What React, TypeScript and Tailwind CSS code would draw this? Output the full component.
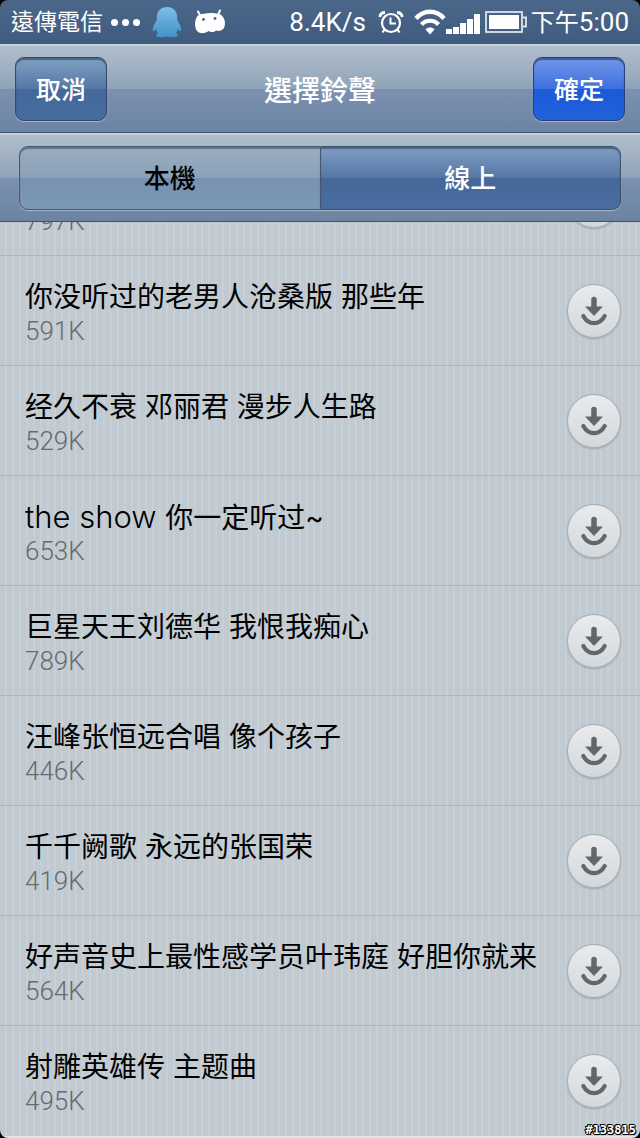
import { useState } from "react";

const ringtones = [
  { title: "", size: "797K" },
  { title: "你没听过的老男人沧桑版 那些年", size: "591K" },
  { title: "经久不衰 邓丽君 漫步人生路", size: "529K" },
  { latin: "the show ", title: "你一定听过~", size: "653K" },
  { title: "巨星天王刘德华 我恨我痴心", size: "789K" },
  { title: "汪峰张恒远合唱 像个孩子", size: "446K" },
  { title: "千千阙歌 永远的张国荣", size: "419K" },
  { title: "好声音史上最性感学员叶玮庭 好胆你就来", size: "564K" },
  { title: "射雕英雄传 主题曲", size: "495K" },
];

const barClass =
  "border-t-2 border-b border-t-[#c6d1db] border-b-[#3f546c] bg-[linear-gradient(#b1bfcd,#8fa2b7_50%,#7c91b1_50%,#6c83a2)]";

function PenguinIcon() {
  return (
    <svg className="h-[32px] w-[30px]" viewBox="0 0 30 32" aria-hidden="true">
      <defs>
        <linearGradient id="penguin" x1="0" y1="0" x2="0" y2="1">
          <stop offset="0" stopColor="#7cbfe8" />
          <stop offset="1" stopColor="#4292c4" />
        </linearGradient>
      </defs>
      <path
        fill="url(#penguin)"
        d="M15 1C8.500 1 4.800 5.500 4.800 11.500v3C2.500 17 .6 21 .8 24.500c.4 1.300 2 .3 3.200-1.500.4 1.800 1 3 2 4-2.500.8-2.500 3.800.5 4 3 .3 6.500.2 8.500-.7 2 .9 5.500 1 8.500.7 3-.2 3-3.200.5-4 1-1 1.600-2.200 2-4 1.200 1.800 2.800 2.800 3.200 1.500C29.400 21 27.500 17 25.200 14.500v-3C25.200 5.500 21.500 1 15 1Z"
      />
    </svg>
  );
}

function AndroidIcon() {
  return (
    <svg className="h-[26px] w-[32px]" viewBox="0 0 32 26" aria-hidden="true">
      <path d="M4 2.500 7 8M26 1.500 23.500 7" stroke="#fff" strokeWidth="2" strokeLinecap="round" />
      <path
        fill="#fff"
        d="M4 6.500C9 3.500 21 3 26.500 5.500c4.500 3 5.500 9 3.500 13.500-2 3-5.500 3.500-8 2.500-2 2-5.500 2-7.500.5-3 2.500-8 3-11 .5C0 19 .3 10 4 6.500Z"
      />
      <circle cx="9.500" cy="10.500" r="1.400" fill="#45628a" />
      <circle cx="21" cy="9.500" r="1.400" fill="#45628a" />
    </svg>
  );
}

function AlarmIcon() {
  return (
    <svg className="h-[24px] w-[26px]" viewBox="0 0 26 24" fill="none" stroke="#fff" aria-hidden="true">
      <circle cx="13" cy="13" r="9" strokeWidth="2.200" />
      <path d="M12.500 7.500v6H18" strokeWidth="2" />
      <path d="M1.800 7C2.200 4 4 2.500 7 2.500M24.200 7c-.4-3-2.200-4.500-5.200-4.500" strokeWidth="2.800" />
      <path d="M6.500 19.500 4.500 22.500M19.500 19.500l2 3" strokeWidth="2" />
    </svg>
  );
}

function WifiIcon() {
  return (
    <svg className="h-[28px] w-[32px]" viewBox="0 0 32 28" fill="none" stroke="#fff" aria-hidden="true">
      <path d="M2 10.500C9.500 1.500 22.500 1.500 30 10.500" strokeWidth="4.500" />
      <path d="M7.500 16.500c4.500-5 12.500-5 17 0" strokeWidth="4.200" />
      <path d="M16 26.500 11.500 21.500c2.500-2.600 6.500-2.600 9 0Z" fill="#fff" stroke="none" />
    </svg>
  );
}

function SignalIcon() {
  return (
    <svg className="h-[20px] w-[35px]" viewBox="0 0 35 20" fill="#fff" aria-hidden="true">
      <path d="M0 15h6v5H0zM7 13h6v7H7zM14 9h6v11h-6zM21 5h6v15h-6zM28 0h6v20h-6z" />
    </svg>
  );
}

function BatteryIcon() {
  return (
    <svg className="h-[22px] w-[42px]" viewBox="0 0 42 22" aria-hidden="true">
      <rect x="1" y="1" width="36" height="20" fill="none" stroke="#dce3ea" strokeWidth="1.800" />
      <rect x="4" y="4" width="30" height="14" fill="#fff" />
      <path d="M38 6.500h3v9h-3" fill="none" stroke="#dce3ea" strokeWidth="1.800" />
    </svg>
  );
}

function DownloadIcon() {
  return (
    <svg className="h-[30px] w-[28px]" viewBox="0 0 28 30" aria-hidden="true">
      <path d="M14 3.500V12" stroke="#666" strokeWidth="5.500" strokeLinecap="round" />
      <path d="M5 10.500h18l-9 9.500Z" fill="#666" />
      <path d="M3.300 20c5.200 9.500 16.200 9.500 21.400 0" fill="none" stroke="#666" strokeWidth="4.200" strokeLinecap="round" />
    </svg>
  );
}

function StatusBar() {
  return (
    <div className="flex h-[44px] shrink-0 items-center justify-between bg-[linear-gradient(#4b688b,#3f5c80)] px-[11px] text-white">
      <div className="flex items-center">
        <span className="text-[23px]">遠傳電信</span>
        <span className="ml-2 flex gap-1">
          <i className="size-[7px] rounded-full bg-white" />
          <i className="size-[7px] rounded-full bg-white" />
          <i className="size-[7px] rounded-full bg-white" />
        </span>
        <span className="ml-3 flex items-center gap-3">
          <PenguinIcon />
          <AndroidIcon />
        </span>
      </div>
      <div className="flex items-center font-['Roboto','Noto_Sans_CJK_TC',sans-serif]">
        <span className="text-[26px]/[32px]">8.4K/s</span>
        <span className="ml-3 flex items-center gap-[10px]">
          <AlarmIcon />
          <WifiIcon />
        </span>
        <span className="mt-1">
          <SignalIcon />
        </span>
        <span className="mx-1">
          <BatteryIcon />
        </span>
        <span className="text-[24px]/[32px]">
          下午<span className="text-[26px]">5:00</span>
        </span>
      </div>
    </div>
  );
}

export default function App() {
  const [tab, setTab] = useState("online");

  return (
    <div className="bg-black">
      <div className="relative flex h-screen flex-col overflow-hidden rounded-[8px] font-['Inter','Noto_Sans_CJK_SC',sans-serif]">
        <div className="flex shrink-0 flex-col font-['Inter','Noto_Sans_CJK_TC',sans-serif]" lang="zh-Hant">
          <StatusBar />

          <header className={`flex h-[89px] items-center justify-between px-[15px] ${barClass}`}>
            <button className="h-[64px] w-[92px] rounded-[9px] border border-[#34496a] bg-[linear-gradient(#819fc3,#5577a5_50%,#456899_50%,#466c9f)] pt-1 text-[25px] font-medium text-white shadow-[0_1px_1px_#ffffff66,inset_0_2px_1px_#22334a88]">
              取消
            </button>
            <h1 className="pt-1 text-[28px] font-medium text-white">選擇鈴聲</h1>
            <button className="h-[64px] w-[92px] rounded-[9px] border border-[#263f7d] bg-[linear-gradient(#7397e9,#3d6fde_50%,#1c5ad7_50%,#2061dc)] pt-1 text-[25px] font-medium text-white shadow-[0_1px_1px_#ffffff66,inset_0_2px_1px_#14275588]">
              確定
            </button>
          </header>

          <nav className={`flex h-[89px] items-center px-[19px] ${barClass}`}>
            <div className="flex h-[64px] flex-1 rounded-[9px] text-[26px] font-medium shadow-[0_1px_1px_#ffffff66]">
              <button
                aria-pressed={tab === "local"}
                onClick={() => setTab("local")}
                className="flex-1 rounded-l-[9px] border border-[#48586c] bg-[linear-gradient(#9cadbe,#8ba1b9_50%,#7892b2_50%,#7b98b6)] text-black shadow-[inset_0_2px_1px_#33445588]"
              >
                本機
              </button>
              <button
                aria-pressed={tab === "online"}
                onClick={() => setTab("online")}
                className="flex-1 rounded-r-[9px] border border-l-0 border-[#3c5070] bg-[linear-gradient(#809dc1,#5577a5_50%,#456899_50%,#486d9e)] text-white shadow-[inset_0_2px_1px_#22334a88]"
              >
                線上
              </button>
            </div>
          </nav>
        </div>

        <main className="min-h-0 flex-1 overflow-hidden border-b-2 border-[#e3e7ea] bg-[repeating-linear-gradient(90deg,#c1cad1_0_5px,#c8d0d6_5px_7px)]">
          <ul className="-mt-[76px]">
            {ringtones.map((tone) => (
              <li
                key={tone.size}
                className="flex h-[110px] items-center justify-between border-b border-[#aeb7be] pl-[25px] pr-[19px] last:border-0"
              >
                <div className="pt-[2px] whitespace-nowrap">
                  <p className="h-[38px] text-[28px] leading-[38px] text-black">
                    {tone.latin && <span className="whitespace-pre text-[31px] font-light">{tone.latin}</span>}
                    {tone.title}
                  </p>
                  <p className="font-['Roboto',sans-serif] text-[26px] leading-[30px] font-light text-[#666b6f]">
                    {tone.size}
                  </p>
                </div>
                <button
                  aria-label={`下载 ${tone.size}`}
                  className="flex size-[54px] shrink-0 items-center justify-center rounded-full border border-[#a5adb3] bg-[linear-gradient(#e9ebed,#d3d8dc)] shadow-[0_1px_2px_#0003]"
                >
                  <DownloadIcon />
                </button>
              </li>
            ))}
          </ul>
        </main>

        <span className="absolute right-1 bottom-0 font-['DejaVu_Sans_Mono',monospace] text-[12px] leading-[16px] font-bold text-white [text-shadow:1px_0_#000,-1px_0_#000,0_1px_#000,0_-1px_#000,1px_1px_#000,-1px_-1px_#000]">
          #133815
        </span>
      </div>
    </div>
  );
}
